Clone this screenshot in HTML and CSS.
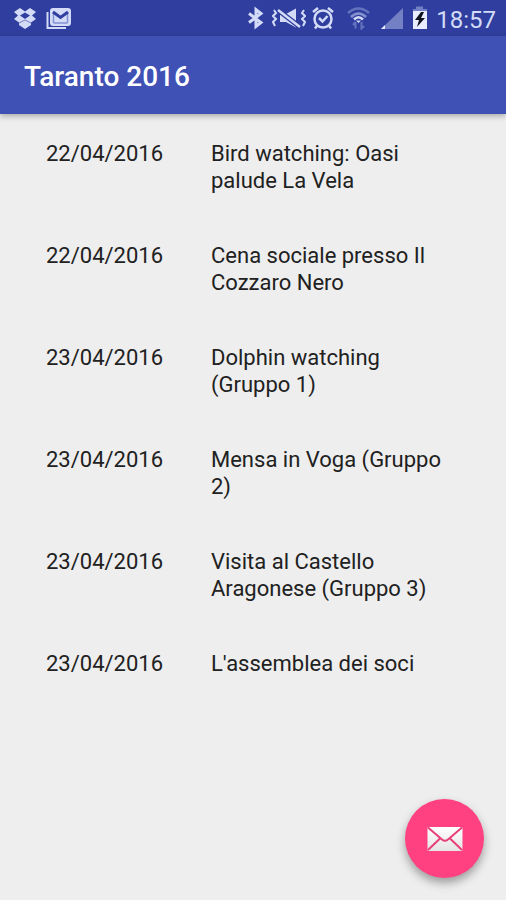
FILE: index.html
```html
<!DOCTYPE html>
<html lang="it">
<head>
    <meta charset="UTF-8">
    <meta name="viewport" content="width=device-width, initial-scale=1.0">
    <title>Taranto 2016</title>
    <link rel="stylesheet" href="styles.css">
</head>
<body>

    <div class="status-bar">
        <div class="status-icons notifications">
            <!-- Dropbox -->
            <svg width="22" height="24" viewBox="0 0 22 24" fill="#d3dbf7">
                <path d="M6 2 L11 5.500 L16 2 L22 6 L18 9.500 L22 13 L17 16.500 V19 L11 23 L5 19 V16.500 L0 13 L4 9.500 L0 6 Z"/>
                <path d="M11 6.500 L16 9.500 L11 13 L6 9.500 Z" fill="#303f9f"/>
                <path d="M5 17 L11 14 L17 17" fill="none" stroke="#7480c4" stroke-width="1"/>
            </svg>
            <!-- Gmail -->
            <svg width="26" height="24" viewBox="0 0 26 24">
                <path d="M1.500 6 V22 H20" fill="none" stroke="#d3dbf7" stroke-width="2"/>
                <rect x="4" y="2" width="21" height="18" rx="3" fill="#d3dbf7"/>
                <path d="M7.500 17 V6 M21.500 6 V17 M7.500 17 H21.500" fill="none" stroke="#8492d2" stroke-width="1.500"/>
                <path d="M7 6 L14.500 11.500 L22 6" fill="none" stroke="#303f9f" stroke-width="3"/>
            </svg>
        </div>
        <div class="status-icons">
            <!-- Bluetooth -->
            <svg width="19" height="24" viewBox="0 0 19 24" fill="none" stroke="#d3dbf7" stroke-width="3">
                <path d="M2 7.500 L14 16.500 L9 20.500 V3.500 L14 7.500 L2 16.500"/>
            </svg>
            <!-- Muted, vibrating -->
            <svg width="34" height="24" viewBox="0 0 34 24">
                <path d="M8 8 H14 L24 2.500 V21.500 L14 16 H8 Z" fill="#d3dbf7"/>
                <path d="M6 4 L28 21" stroke="#303f9f" stroke-width="5"/>
                <path d="M6 4 L28 21" stroke="#d3dbf7" stroke-width="2.500"/>
                <path d="M2 4 L4 7 L1 10 L4 13 L1 16 L3 20 M32 4 L30 7 L33 10 L30 13 L33 16 L31 20" fill="none" stroke="#d3dbf7" stroke-width="2"/>
            </svg>
            <!-- Alarm -->
            <svg width="25" height="24" viewBox="0 0 25 24" fill="none" stroke="#d3dbf7" stroke-width="2.500">
                <circle cx="11" cy="13" r="8.500"/>
                <path d="M1 6 L6 2 M21 6 L16 2 M5.500 19 L3 22.500 M16.500 19 L19 22.500"/>
                <path d="M7 12 L10.500 15.500 L15.500 10" stroke-width="2.500"/>
            </svg>
            <!-- Wifi -->
            <svg width="32" height="24" viewBox="0 0 32 24" fill="none" stroke-width="2.500">
                <path d="M5 7 Q15.500 -2 26 7" stroke="#6572bd"/>
                <path d="M8 11 Q15.500 4 23 11" stroke="#8793cf"/>
                <path d="M11 13.500 Q15.500 9 20 13.500" stroke="#d3dbf7"/>
                <path d="M13 14.500 H18 L15.500 17 Z" fill="#d3dbf7"/>
                <path d="M12.500 22.500 V16 M10 19 L12.500 16 M18.500 16 V22.500 L21 20" stroke="#6572bd" stroke-width="2"/>
            </svg>
            <!-- Signal -->
            <svg width="25" height="24" viewBox="0 0 25 24">
                <path d="M22 2 V23 H0 Z" fill="#7480c4"/>
                <path d="M4 19 V23 H0 Z" fill="#e8edff"/>
            </svg>
            <!-- Battery, charging -->
            <svg width="18" height="24" viewBox="0 0 18 24">
                <path d="M4 0.500 H11 V3 H15 V7 H1 V3 H4 Z" fill="#7480c4"/>
                <rect x="1" y="5" width="14" height="18" fill="#e8edff"/>
                <path d="M9 6 L3 14 H7 L5 21 L13 12 H9 L12 6 Z" fill="#10131f"/>
            </svg>
            <span class="clock">18:57</span>
        </div>
    </div>

    <header class="toolbar">
        <h1>Taranto 2016</h1>
    </header>

    <main>
        <table class="events">
            <tbody>
                <tr>
                    <td class="date">22/04/2016</td>
                    <td>Bird watching: Oasi palude La Vela</td>
                </tr>
                <tr>
                    <td class="date">22/04/2016</td>
                    <td>Cena sociale presso Il Cozzaro Nero</td>
                </tr>
                <tr>
                    <td class="date">23/04/2016</td>
                    <td>Dolphin watching (Gruppo 1)</td>
                </tr>
                <tr>
                    <td class="date">23/04/2016</td>
                    <td>Mensa in Voga (Gruppo 2)</td>
                </tr>
                <tr>
                    <td class="date">23/04/2016</td>
                    <td>Visita al Castello Aragonese (Gruppo 3)</td>
                </tr>
                <tr>
                    <td class="date">23/04/2016</td>
                    <td>L'assemblea dei soci</td>
                </tr>
            </tbody>
        </table>
    </main>

    <button type="button" class="fab" aria-label="Email">
        <svg width="36" height="26" viewBox="0 0 36 26">
            <defs>
                <linearGradient id="paper" x1="0" y1="0" x2="0" y2="1">
                    <stop offset="0" stop-color="#ffffff"/>
                    <stop offset="1" stop-color="#e4e4e4"/>
                </linearGradient>
            </defs>
            <rect x="0.500" y="1" width="35" height="24" rx="1" fill="url(#paper)"/>
            <path d="M1 1.500 L15 13.500 Q18 16 21 13.500 L35 1.500 M1 24 L13 12.500 M35 24 L23 12.500" fill="none" stroke="#e8407a" stroke-width="2"/>
        </svg>
    </button>

</body>
</html>
```

FILE: styles.css
```css
* {
    box-sizing: border-box;
}

body {
    margin: 0;
    min-height: 100vh;
    background-color: #eeeeee;
    color: #212121;
    font-family: Roboto, sans-serif;
}

.status-bar {
    display: flex;
    align-items: center;
    justify-content: space-between;
    height: 36px;
    padding: 0 10px 0 14px;
    background-color: #303f9f;
}

.status-icons {
    display: flex;
    align-items: center;
    gap: 6px;
}

.notifications {
    gap: 10px;
}

.clock {
    padding-top: 4px;
    color: #d3dbf7;
    font-size: 24px;
    line-height: 32px;
}

.toolbar {
    display: flex;
    align-items: center;
    height: 78px;
    padding: 2px 24px 0;
    background-color: #3f51b5;
    box-shadow: 0 2px 6px rgba(0, 0, 0, 0.3);
}

.toolbar h1 {
    margin: 0;
    color: white;
    font-size: 28px;
    font-weight: 500;
}

main {
    padding: 2px 46px;
}

/* Event list */
.events {
    width: 100%;
    border-collapse: collapse;
    font-size: 22px;
    line-height: 27px;
}

.events td {
    padding: 24px 0;
    vertical-align: top;
}

.events .date {
    width: 165px;
}

/* Floating action button */
.fab {
    position: fixed;
    right: 22px;
    bottom: 22px;
    display: flex;
    align-items: center;
    justify-content: center;
    width: 79px;
    height: 79px;
    padding: 0;
    border: none;
    border-radius: 50%;
    background-color: #ff4081;
    box-shadow: 0 5px 10px rgba(0, 0, 0, 0.35);
    cursor: pointer;
}
```
